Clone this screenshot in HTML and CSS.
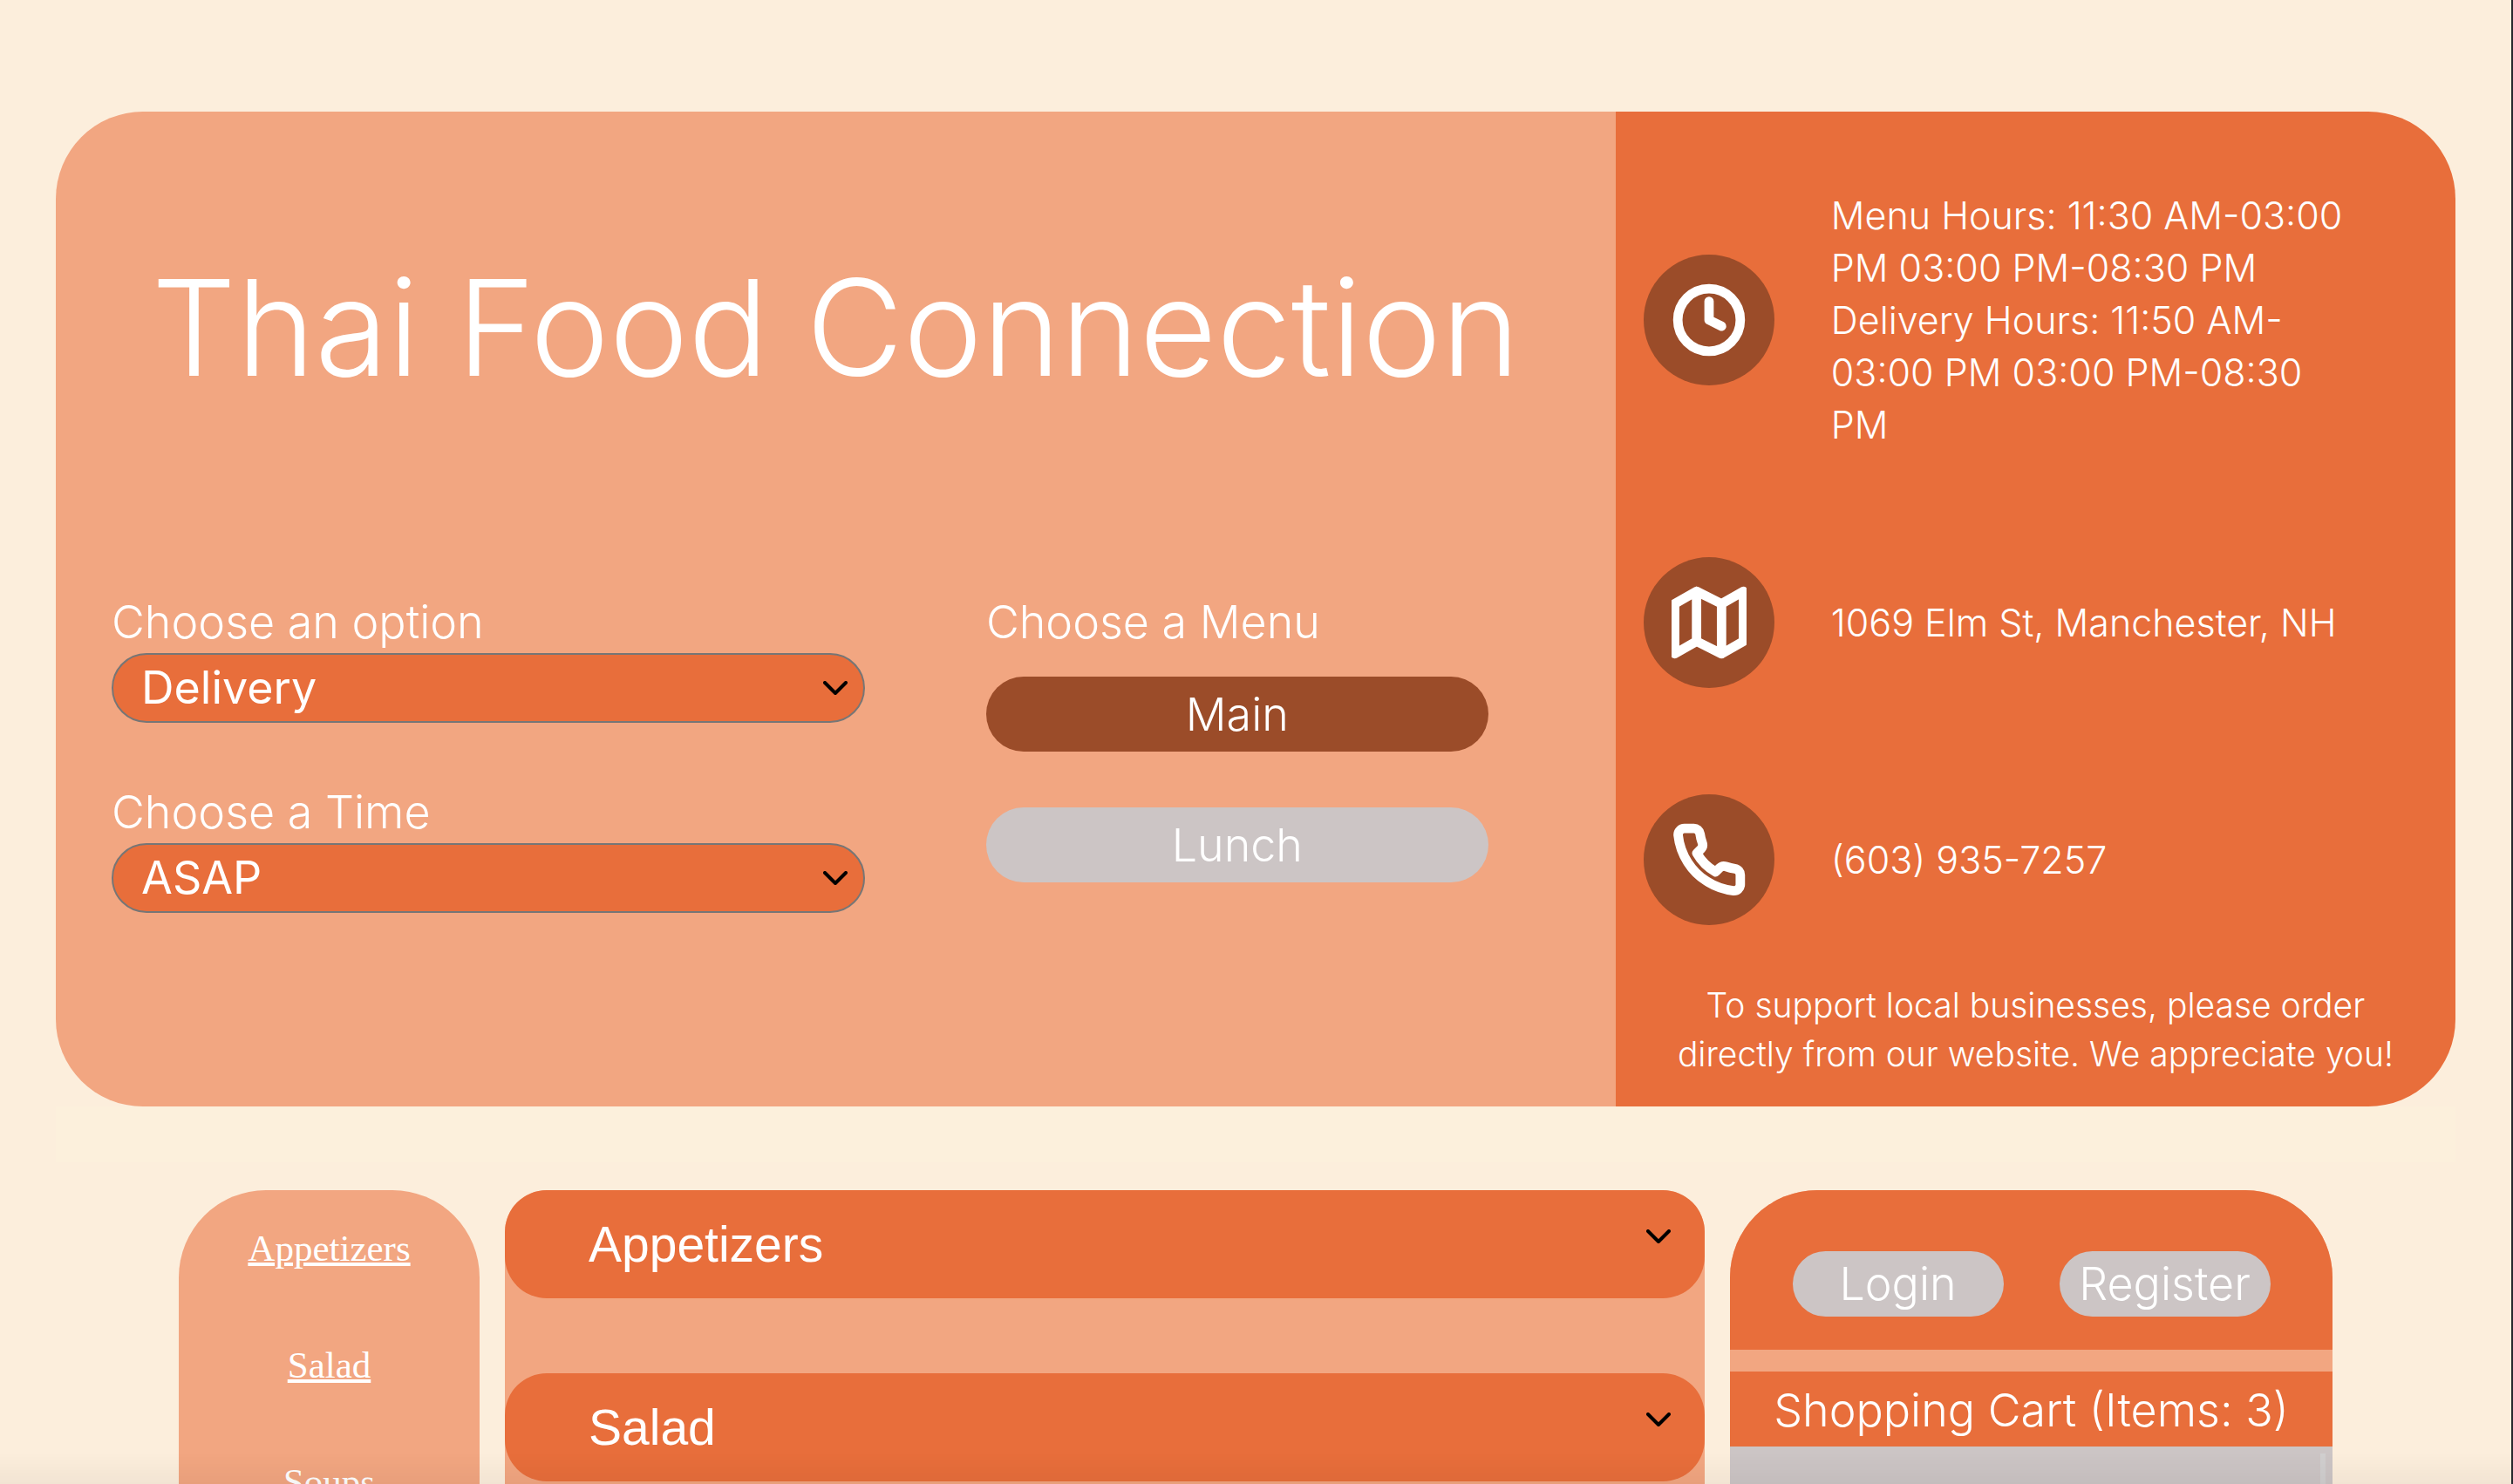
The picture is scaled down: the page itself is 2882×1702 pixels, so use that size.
FILE: index.html
```html
<!DOCTYPE html>
<html lang="en">
<head>
<meta charset="utf-8">
<meta name="viewport" content="width=device-width, initial-scale=1">
<title>Thai Food Connection</title>
<link rel="stylesheet" href="styles.css">
</head>
<body>
<header class="hero">
  <section class="order">
    <h1 class="title">Thai Food Connection</h1>
    <div class="choices">
      <form class="options">
        <div class="field">
          <label class="label" for="option">Choose an option</label>
          <div class="select-wrap">
            <select class="select" id="option"><option>Delivery</option><option>Pickup</option></select>
            <svg class="chevron" viewBox="0 0 28 16" aria-hidden="true"><path d="M2 2l12 12L26 2"/></svg>
          </div>
        </div>
        <div class="field">
          <label class="label" for="time">Choose a Time</label>
          <div class="select-wrap">
            <select class="select" id="time"><option>ASAP</option></select>
            <svg class="chevron" viewBox="0 0 28 16" aria-hidden="true"><path d="M2 2l12 12L26 2"/></svg>
          </div>
        </div>
      </form>
      <div class="menus">
        <p class="label">Choose a Menu</p>
        <button class="menu-button active" type="button">Main</button>
        <button class="menu-button" type="button">Lunch</button>
      </div>
    </div>
  </section>
  <aside class="info">
    <div class="info-row">
      <span class="badge"><svg class="icon" viewBox="0 0 24 24" aria-hidden="true"><circle cx="12" cy="12" r="10"/><path d="M12 6v6l4 2"/></svg></span>
      <p class="info-text">Menu Hours: 11:30 AM-03:00 PM 03:00 PM-08:30 PM Delivery Hours: 11:50 AM-03:00 PM 03:00 PM-08:30 PM</p>
    </div>
    <div class="info-row">
      <span class="badge"><svg class="icon" viewBox="0 0 24 24" aria-hidden="true"><path d="M1 6v16l7-4 8 4 7-4V2l-7 4-8-4-7 4zM8 2v16M16 6v16"/></svg></span>
      <p class="info-text">1069 Elm St, Manchester, NH</p>
    </div>
    <div class="info-row">
      <span class="badge"><svg class="icon" viewBox="0 0 24 24" aria-hidden="true"><path d="M22 16.92v3a2 2 0 0 1-2.18 2 19.79 19.79 0 0 1-8.63-3.07 19.5 19.5 0 0 1-6-6 19.79 19.79 0 0 1-3.07-8.67A2 2 0 0 1 4.11 2h3a2 2 0 0 1 2 1.72 12.84 12.84 0 0 0 .7 2.81 2 2 0 0 1-.45 2.11L8.09 9.91a16 16 0 0 0 6 6l1.27-1.27a2 2 0 0 1 2.11-.45 12.84 12.84 0 0 0 2.81.7A2 2 0 0 1 22 16.92z"/></svg></span>
      <p class="info-text">(603) 935-7257</p>
    </div>
    <p class="note">To support local businesses, please order directly from our website. We appreciate you!</p>
  </aside>
</header>
<div class="divider"></div>
<main class="content">
  <nav class="categories">
    <a class="category" href="#appetizers">Appetizers</a>
    <a class="category" href="#salad">Salad</a>
    <a class="category" href="#soups">Soups</a>
  </nav>
  <section class="dishes">
    <button class="group" id="appetizers" type="button">Appetizers<svg class="chevron" viewBox="0 0 28 16" aria-hidden="true"><path d="M2 2l12 12L26 2"/></svg></button>
    <button class="group" id="salad" type="button">Salad<svg class="chevron" viewBox="0 0 28 16" aria-hidden="true"><path d="M2 2l12 12L26 2"/></svg></button>
  </section>
  <aside class="cart">
    <div class="account">
      <button class="account-button" type="button">Login</button>
      <button class="account-button" type="button">Register</button>
    </div>
    <h2 class="cart-title">Shopping Cart (Items: 3)</h2>
    <div class="cart-items"><span class="scroll-thumb"></span></div>
  </aside>
</main>
</body>
</html>
```
FILE: styles.css
```css
* { box-sizing: border-box; }
html { height: 100%; overflow: hidden; background: #fceedc; }
body {
  display: flex;
  flex-direction: column;
  height: 100%;
  margin: 0;
  padding: 128px 64px 0;
  overflow: hidden;
  border-right: 2px solid #25282d;
  font-family: Inter, "Liberation Sans", sans-serif;
  font-weight: 350;
  color: #fff;
}
body::after {
  content: "";
  position: fixed;
  inset: auto 2px 0 0;
  height: 36px;
  background: linear-gradient(transparent, rgba(0, 0, 0, 0.04));
  pointer-events: none;
}
h1, h2, p { margin: 0; font-weight: inherit; }
button { border: 0; padding: 0; font: inherit; color: inherit; }

.hero {
  flex: none;
  display: grid;
  grid-template-columns: minmax(0, 65fr) minmax(0, 35fr);
  border-radius: 100px;
  overflow: hidden;
}
.order { background: #f2a681; padding: 146px 64px 0; }
.title { font-size: 153px; line-height: 204px; text-align: center; white-space: nowrap; }
.choices { display: grid; grid-template-columns: 54fr 36fr; column-gap: 139px; margin-top: 197px; padding-right: 82px; }
.options { display: grid; align-content: start; row-gap: 64px; }
.label { display: block; padding-top: 4px; font-size: 52px; line-height: 70px; }
.select-wrap { display: flex; align-items: center; position: relative; }
.select {
  appearance: none;
  width: 100%;
  height: 80px;
  padding: 0 32px;
  border: 2px solid #767676;
  border-radius: 40px;
  background: #e86e3b;
  font: 400 52px/72px Inter, "Liberation Sans", sans-serif;
  color: #fff;
}
.chevron { width: 28px; height: 16px; fill: none; stroke: #000; stroke-width: 4; stroke-linecap: round; stroke-linejoin: round; }
.select-wrap .chevron { position: absolute; right: 20px; pointer-events: none; }
.menus { display: grid; align-content: start; }
.menu-button { height: 86px; margin-top: 27px; border-radius: 43px; background: #ccc5c5; font-size: 52px; }
.menu-button + .menu-button { margin-top: 64px; }
.menu-button.active { background: #9b4c29; }

.info { background: #e86e3b; padding: 89px 32px 32px; font-size: 43px; line-height: 60px; }
.info-row { display: grid; grid-template-columns: 150px 1fr; column-gap: 65px; align-items: center; padding-right: 96px; margin-bottom: 122px; }
.info-row:nth-child(3) { margin-bottom: 64px; }
.badge { display: flex; align-items: center; justify-content: center; width: 150px; height: 150px; border-radius: 50%; background: #9b4c29; }
.icon { width: 86px; height: 86px; fill: none; stroke: #fff; stroke-width: 3; stroke-linecap: round; stroke-linejoin: round; }
.note { font-size: 39px; line-height: 56px; text-align: center; }

.divider { flex: none; height: 64px; background: #fcf0dc; }
.content { flex: 1 0 auto; display: grid; grid-template-columns: 345fr 1376fr 691fr; column-gap: 29px; padding: 32px 141px 0; }
.categories { display: flex; flex-direction: column; align-items: center; gap: 84px; padding-top: 42px; border-radius: 100px 100px 0 0; background: #f2a681; }
.category { color: #fff; font: 43px/50px "Liberation Serif", serif; text-decoration-thickness: 4px; }
.dishes { display: flex; flex-direction: column; gap: 86px; border-radius: 48px 48px 0 0; background: #f2a681; }
.group {
  display: flex;
  justify-content: space-between;
  height: 124px;
  padding: 29px 39px 29px 96px;
  border-radius: 48px;
  background: #e86e3b;
  font: 57px/66px "Liberation Sans", sans-serif;
}
.group .chevron { margin-top: 16px; }
.cart { display: flex; flex-direction: column; border-radius: 100px 100px 0 0; overflow: hidden; background: #f2a681; }
.account { display: flex; justify-content: center; gap: 64px; height: 183px; padding-top: 70px; background: #e86e3b; }
.account-button { width: 242px; height: 75px; border-radius: 38px; background: #ccc5c5; font-size: 52px; line-height: 75px; }
.cart-title { margin-top: 25px; padding-top: 4px; background: #e86e3b; font-size: 52px; line-height: 82px; text-align: center; }
.cart-items { flex: 1; display: flex; justify-content: flex-end; padding: 8px 8px 0; background: #ccc5c5; }
.scroll-thumb { width: 6px; background: #d1cfcf; }
```
